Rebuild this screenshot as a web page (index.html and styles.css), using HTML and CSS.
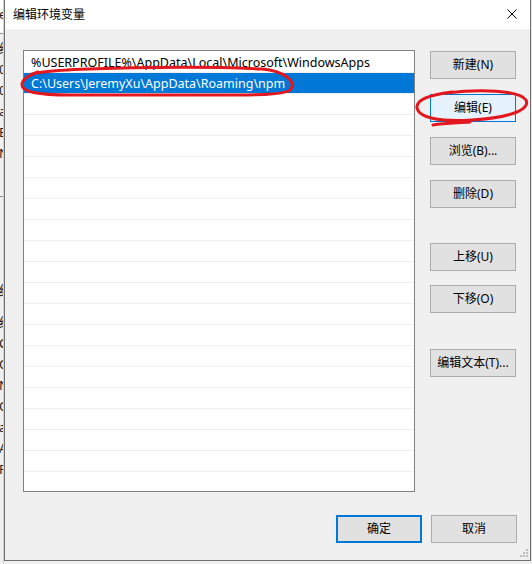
FILE: index.html
```html
<!DOCTYPE html>
<html lang="zh-CN">
<head>
<meta charset="utf-8">
<title>编辑环境变量</title>
<link rel="stylesheet" href="styles.css">
</head>
<body>
<div class="screen">
  <div class="behind">
    <div class="behind-top"><span class="frag f-title">e</span></div>
    <div class="behind-body">
      <div class="frag">级</div>
      <div class="frag">0</div>
      <div class="frag">0</div>
      <div class="frag">a</div>
      <div class="frag">E</div>
      <div class="frag">N</div>
      <div class="behind-sep"></div>
      <div class="frag">统</div>
      <div class="frag f-gap2">级</div>
      <div class="frag">C</div>
      <div class="frag">O</div>
      <div class="frag">N</div>
      <div class="frag">O</div>
      <div class="frag">a</div>
      <div class="frag">A</div>
      <div class="frag">F</div>
    </div>
  </div>

  <div class="dialog">
    <div class="titlebar">
      <span class="title">编辑环境变量</span>
      <svg class="close" width="10" height="10" viewBox="0 0 10 10" aria-hidden="true">
        <path d="M0.5 0.5 L9.5 9.5 M9.5 0.5 L0.5 9.5" stroke="#000" stroke-width="1" fill="none"/>
      </svg>
    </div>
    <div class="content">
      <div class="main">
        <div class="list">
          <div class="row">%USERPROFILE%\AppData\Local\Microsoft\WindowsApps</div>
          <div class="row selected">C:\Users\JeremyXu\AppData\Roaming\npm</div>
          <div class="row"></div><div class="row"></div><div class="row"></div>
          <div class="row"></div><div class="row"></div><div class="row"></div>
          <div class="row"></div><div class="row"></div><div class="row"></div>
          <div class="row"></div><div class="row"></div><div class="row"></div>
          <div class="row"></div><div class="row"></div><div class="row"></div>
          <div class="row"></div><div class="row"></div><div class="row"></div>
        </div>
        <div class="side">
          <div class="group g1">
            <button class="btn">新建(N)</button>
            <button class="btn hot">编辑(E)</button>
            <button class="btn">浏览(B)...</button>
            <button class="btn">删除(D)</button>
          </div>
          <div class="group g2">
            <button class="btn">上移(U)</button>
            <button class="btn">下移(O)</button>
          </div>
          <div class="group g3">
            <button class="btn">编辑文本(T)...</button>
          </div>
        </div>
      </div>
      <div class="footer">
        <button class="btn default">确定</button>
        <button class="btn">取消</button>
      </div>
      <svg class="grip" width="9" height="9" viewBox="0 0 9 9" aria-hidden="true">
        <rect x="6" y="0" width="2" height="2" fill="#bdbdbd"/>
        <rect x="3" y="3" width="2" height="2" fill="#bdbdbd"/>
        <rect x="6" y="3" width="2" height="2" fill="#bdbdbd"/>
        <rect x="0" y="6" width="2" height="2" fill="#bdbdbd"/>
        <rect x="3" y="6" width="2" height="2" fill="#bdbdbd"/>
        <rect x="6" y="6" width="2" height="2" fill="#bdbdbd"/>
      </svg>
    </div>
  </div>
  <div class="behind-right"></div>

  <svg class="marks" width="532" height="564" viewBox="0 0 532 564" aria-hidden="true">
    <path d="M32 74 C 60 67, 200 66, 262 69 C 284 71, 296 81, 291 89 C 287 95, 260 95, 210 95 L 70 95 C 38 95, 21 92, 22 84 C 23 79, 27 76, 38 72" fill="none" stroke="#e3171d" stroke-width="3" stroke-linecap="round"/>
    <path d="M446 93 C 480 89, 519 90, 526 100 C 531 110, 508 118, 472 120 C 440 122, 419 118, 417 108 C 416 100, 428 95, 452 92 M433 125 C 445 123, 458 123, 470 122" fill="none" stroke="#e3171d" stroke-width="3" stroke-linecap="round"/>
  </svg>
</div>
</body>
</html>
```

FILE: styles.css
```css
* { box-sizing: border-box; }

html, body {
  margin: 0;
  padding: 0;
}

body {
  width: 532px;
  height: 564px;
  overflow: hidden;
  background: #f0f0f0;
  font-family: "Noto Sans", "Noto Sans CJK SC", sans-serif;
  color: #000;
}

.screen {
  position: relative;
  display: flex;
  width: 532px;
  height: 564px;
  background: #f0f0f0;
}

/* window behind the dialog */
.behind {
  width: 4px;
  height: 564px;
  overflow: hidden;
  display: flex;
  flex-direction: column;
  background: #f0f0f0;
  border-right: 1px solid #d0d0d0;
}
.behind-top {
  height: 34px;
  background: #fff;
  border-bottom: 1px solid #8a8a8a;
  padding-top: 6px;
}
.behind-body {
  display: flex;
  flex-direction: column;
  padding-top: 4px;
}
.frag {
  font-size: 13px;
  line-height: 21px;
  height: 21px;
  white-space: nowrap;
  color: #1a1a1a;
  margin-left: -1px;
}
.f-title { display: block; line-height: 16px; }
.behind-sep {
  height: 1px;
  background: #8a8a8a;
  margin: 32px 0 83px;
}
.f-gap2 { margin-top: 11px; }

.behind-right {
  width: 1px;
  height: 564px;
  background: #e6e6e6;
}

/* dialog */
.dialog {
  width: 527px;
  height: 561px;
  flex: none;
  border-left: 1px solid #707070;
  border-right: 1px solid #707070;
  border-bottom: 1px solid #707070;
  display: flex;
  flex-direction: column;
  background: #f0f0f0;
}

.titlebar {
  height: 29px;
  flex: none;
  background: #fff;
  display: flex;
  align-items: center;
  justify-content: space-between;
  padding: 0 13px 2px 8px;
}
.title {
  font-family: "Noto Sans CJK SC", sans-serif;
  font-size: 12px;
  line-height: 14px;
  color: #000;
}
.close {
  display: block;
  margin-top: 1px;
}

.content {
  position: relative;
  flex: 1;
  padding: 21px 13px 0 18px;
  display: flex;
  flex-direction: column;
}

.main {
  display: flex;
  gap: 15px;
}

.list {
  width: 392px;
  height: 442px;
  flex: none;
  background: #fff;
  border: 1px solid #828282;
  padding-top: 1px;
  overflow: hidden;
}
.row {
  height: 21px;
  line-height: 21px;
  border-bottom: 1px solid #f0f0f0;
  padding-left: 7px;
  font-size: 12.5px;
  white-space: nowrap;
  color: #000;
}
.row.selected {
  background: #0078d7;
  color: #fff;
}

.side {
  width: 86px;
  flex: none;
  padding-top: 1px;
  display: flex;
  flex-direction: column;
}
.group {
  display: flex;
  flex-direction: column;
}
.g1 { gap: 15px; }
.g2 { gap: 14px; margin-top: 35px; }
.g3 { margin-top: 36px; }

.btn {
  width: 86px;
  height: 28px;
  margin: 0;
  padding: 0 0 1px;
  border: 1px solid #adadad;
  background: #e1e1e1;
  font-family: "Noto Sans", "Noto Sans CJK SC", sans-serif;
  font-size: 12px;
  line-height: 16px;
  color: #000;
  text-align: center;
}
.btn.hot {
  background: #e5f1fb;
  border-color: #0078d7;
}
.btn.default {
  border: 2px solid #0078d7;
}

.footer {
  margin-top: 23px;
  display: flex;
  justify-content: flex-end;
  gap: 9px;
}

.grip {
  position: absolute;
  right: 1px;
  bottom: 2px;
}

.marks {
  position: absolute;
  left: 0;
  top: 0;
  pointer-events: none;
}
```
